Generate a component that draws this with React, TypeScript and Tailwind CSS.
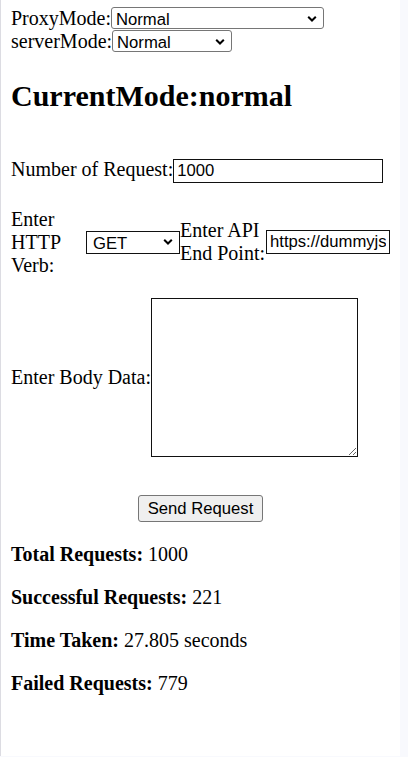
import React from 'react';

const serif = "font-['Liberation_Serif','Times_New_Roman',serif]";
const sans = "font-['Liberation_Sans',Arial,sans-serif]";

const Chevron = () => (
  <svg
    className="pointer-events-none absolute right-[7px] top-1/2 -translate-y-1/2"
    width="10"
    height="7"
    viewBox="0 0 10 7"
  >
    <path d="M1.2 1.2L5 5l3.8-3.8" fill="none" stroke="#000" strokeWidth="2" />
  </svg>
);

const App: React.FC = () => {
  return (
    <div className="w-full h-[757px] bg-[#f8f9fd]">
      <div className={`w-[400px] h-[756px] bg-white border-l border-[#dcdce2] px-[10px] pt-[7px] text-[20px] leading-[23px] text-black ${serif}`}>
        {/* Mode selectors */}
        <div>
          <label>ProxyMode:</label>
          <span className="relative inline-block align-baseline">
            <select
              defaultValue="Normal"
              className={`appearance-none w-[213px] h-[22px] pl-[4px] bg-white border border-[#767676] rounded-[3px] text-[16.67px] ${sans}`}
            >
              <option>Normal</option>
            </select>
            <Chevron />
          </span>
        </div>
        <div>
          <label>serverMode:</label>
          <span className="relative inline-block align-baseline">
            <select
              defaultValue="Normal"
              className={`appearance-none w-[120px] h-[22px] pl-[4px] bg-white border border-[#767676] rounded-[3px] text-[16.67px] ${sans}`}
            >
              <option>Normal</option>
            </select>
            <Chevron />
          </span>
        </div>

        <h2 className="mt-[26px] mb-[44px] text-[30px] leading-[34.5px] font-bold">CurrentMode:normal</h2>

        {/* Request form */}
        <div>
          <label>Number of Request:</label>
          <input
            defaultValue="1000"
            className={`w-[210px] h-[24px] px-[3px] border border-[#111] text-[16.67px] align-baseline ${sans}`}
          />
        </div>

        <div className="mt-[25px] flex items-center">
          <label className="w-[75px] shrink-0">Enter HTTP Verb:</label>
          <span className="relative inline-block shrink-0">
            <select
              defaultValue="GET"
              className={`appearance-none block w-[94px] h-[23px] pl-[6px] bg-white border border-[#111] text-[16.67px] ${sans}`}
            >
              <option>GET</option>
              <option>POST</option>
              <option>PUT</option>
              <option>DELETE</option>
            </select>
            <Chevron />
          </span>
          <label className="w-[86px] shrink-0">Enter API End Point:</label>
          <input
            defaultValue="https://dummyjson.com/products"
            className={`w-[124px] h-[24px] shrink-0 px-[3px] border border-[#111] text-[16.67px] ${sans}`}
          />
        </div>

        <div className="mt-[21px] flex items-center">
          <label className="shrink-0">Enter Body Data:</label>
          <textarea className={`w-[207px] h-[159px] border border-[#111] text-[16.67px] ${sans}`} />
        </div>

        <div className="mt-[38px] text-center">
          <button
            className={`h-[27px] px-[9px] bg-[#efefef] border border-[#767676] rounded-[3px] text-[16.67px] ${sans}`}
          >
            Send Request
          </button>
        </div>

        {/* Results */}
        <div>
          <p className="mt-[21px]">
            <strong>Total Requests:</strong> 1000
          </p>
          <p className="mt-[20.3px]">
            <strong>Successful Requests:</strong> 221
          </p>
          <p className="mt-[20.3px]">
            <strong>Time Taken:</strong> 27.805 seconds
          </p>
          <p className="mt-[20.3px]">
            <strong>Failed Requests:</strong> 779
          </p>
        </div>
      </div>
    </div>
  );
};

export default App;
